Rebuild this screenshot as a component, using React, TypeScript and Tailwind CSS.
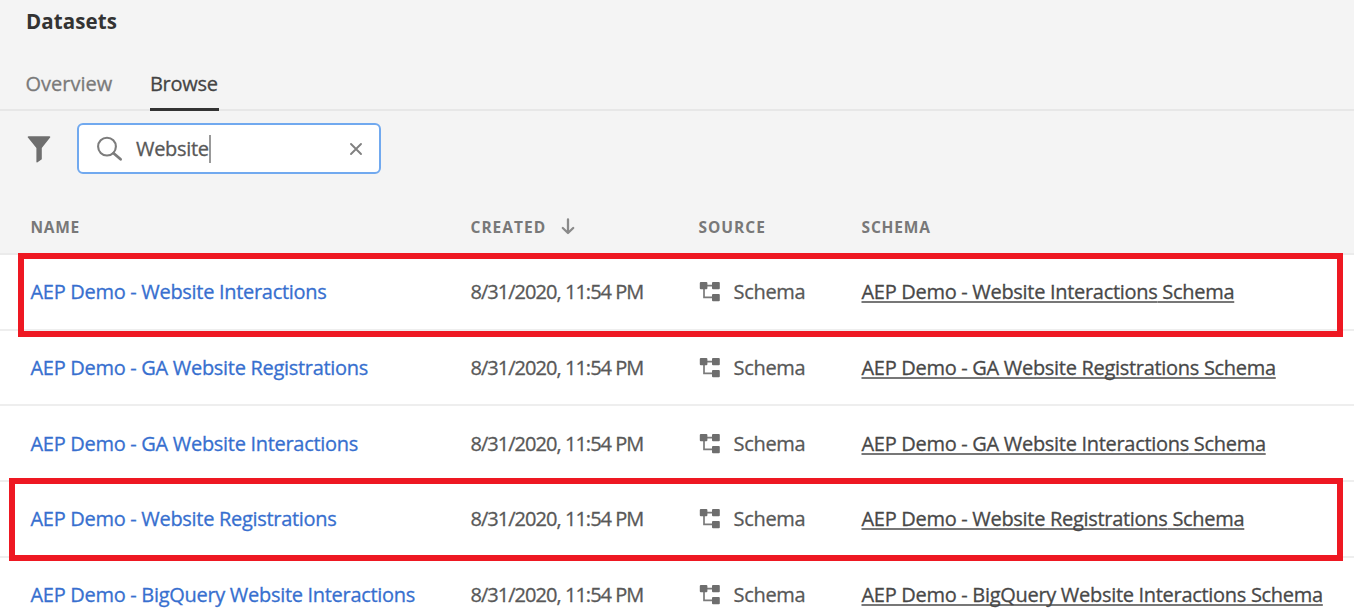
type Dataset = { name: string; created: string; source: string; highlight?: string };

const created = "8/31/2020, 11:54 PM";

const datasets: Dataset[] = [
  { name: "AEP Demo - Website Interactions", created, source: "Schema", highlight: "left-[18px] -top-[2px] w-[1325px] h-[84px]" },
  { name: "AEP Demo - GA Website Registrations", created, source: "Schema" },
  { name: "AEP Demo - GA Website Interactions", created, source: "Schema" },
  { name: "AEP Demo - Website Registrations", created, source: "Schema", highlight: "left-[9px] -top-[4px] w-[1334px] h-[82.5px]" },
  { name: "AEP Demo - BigQuery Website Interactions", created, source: "Schema" },
];

const columns = "grid grid-cols-[440px_228px_163px_1fr] pl-[30.5px]";

function FilterIcon() {
  return (
    <svg className="h-[28px] w-[24px]" viewBox="0 0 24 28" fill="#6e6e6e">
      <path d="M1.6 1.2h20.8c.9 0 1.2.8.7 1.4L14.8 13V24.2l-4.6 3.2c-.4.3-.8 0-.8-.4V13L.9 2.6C.4 2 .7 1.2 1.6 1.2Z" />
    </svg>
  );
}

function SearchIcon() {
  return (
    <svg className="h-[26px] w-[27px]" viewBox="0 0 27 26" fill="none" stroke="#7c7c7c">
      <circle cx="11" cy="10.6" r="8.9" strokeWidth="2.1" />
      <path d="M17.6 17.2L24.6 23.3" strokeWidth="2.8" strokeLinecap="round" />
    </svg>
  );
}

function ClearIcon() {
  return (
    <svg className="h-[14px] w-[14px]" viewBox="0 0 14 14" stroke="#808080" strokeWidth="1.9" strokeLinecap="round">
      <path d="M2 2L12 12M12 2L2 12" />
    </svg>
  );
}

function SortIcon() {
  return (
    <svg className="-mt-[2px] h-[17px] w-[14px]" viewBox="0 0 14 17" fill="none" stroke="#8a8a8a" strokeWidth="2.3" strokeLinecap="round" strokeLinejoin="round">
      <path d="M7 1.4V14.6M1.8 10L7 15L12.2 10" />
    </svg>
  );
}

function SchemaIcon() {
  return (
    <svg className="-mt-[1px] h-[21px] w-[22px]" viewBox="0 0 22 21">
      <path d="M4.7 4.6H17M5 4.6V16.4H17" fill="none" stroke="#7a7a7a" strokeWidth="1.7" />
      <g fill="#6e6e6e">
        <rect x="0.8" y="1" width="7.6" height="7.2" rx="1" />
        <rect x="13" y="1" width="7.8" height="7.2" rx="1" />
        <rect x="13" y="13" width="7.8" height="7.2" rx="1" />
      </g>
    </svg>
  );
}

export default function App() {
  return (
    <div className="flex h-[616px] w-[1354px] flex-col overflow-hidden bg-white font-['Open_Sans',sans-serif] text-[20px] leading-[28px] tracking-[-0.3px] text-[#585858] [-webkit-text-stroke:0.3px]">
      <div className="flex h-[255px] shrink-0 flex-col border-b-2 border-[#ebebeb] bg-[#f4f4f4]">
        <h1 className="h-[60px] pt-[8px] pl-[26px] text-[20.5px] leading-[26px] font-bold tracking-[0.1px] text-[#333333] [-webkit-text-stroke:0px]">Datasets</h1>
        <nav className="flex h-[51px] shrink-0 gap-[38px] border-b-2 border-[#e7e7e7] pl-[25.5px]">
          <span className="h-[51px] w-[86.5px] pt-[10px] whitespace-nowrap tracking-[0px] text-[#7a7a7a]">Overview</span>
          <span className="h-[51px] w-[69px] border-b-3 border-[#333333] pt-[10px] whitespace-nowrap text-[#444444]">Browse</span>
        </nav>
        <div className="flex h-[75px] shrink-0 items-center gap-[26px] pl-[27px]">
          <FilterIcon />
          <div className="flex h-[51px] w-[304px] items-center rounded-[6px] border-2 border-[#71a9ef] bg-white pr-[16px] pl-[17px]">
            <SearchIcon />
            <span className="ml-[13px]">Website</span>
            <span className="h-[28px] w-[2px] bg-[#999999]" />
            <span className="ml-auto"><ClearIcon /></span>
          </div>
        </div>
        <div className={`${columns} pt-[27px] text-[15.5px] leading-[28px] font-bold tracking-[1px] text-[#787878] [-webkit-text-stroke:0px]`}>
          <span className="tracking-[0.7px]">NAME</span>
          <span className="flex items-center gap-[15px]">CREATED <SortIcon /></span>
          <span>SOURCE</span>
          <span className="tracking-[0.85px]">SCHEMA</span>
        </div>
      </div>
      {datasets.map((d) => (
        <div key={d.name} className={`${columns} relative h-[75.7px] shrink-0 items-center border-b-2 border-[#eeeeee] pt-[0.6px] whitespace-nowrap`}>
          <a className="text-[#376fcf]">{d.name}</a>
          <span className="tracking-[-0.97px]">{d.created}</span>
          <span className="flex items-center gap-[13px]">
            <SchemaIcon />
            <span>{d.source}</span>
          </span>
          <a className="text-[#484848] underline decoration-[#777777] decoration-2 underline-offset-[2px] [text-decoration-skip-ink:none]">{d.name} Schema</a>
          {d.highlight && <div className={`absolute z-10 border-6 border-[#ee1822] ${d.highlight}`} />}
        </div>
      ))}
    </div>
  );
}
